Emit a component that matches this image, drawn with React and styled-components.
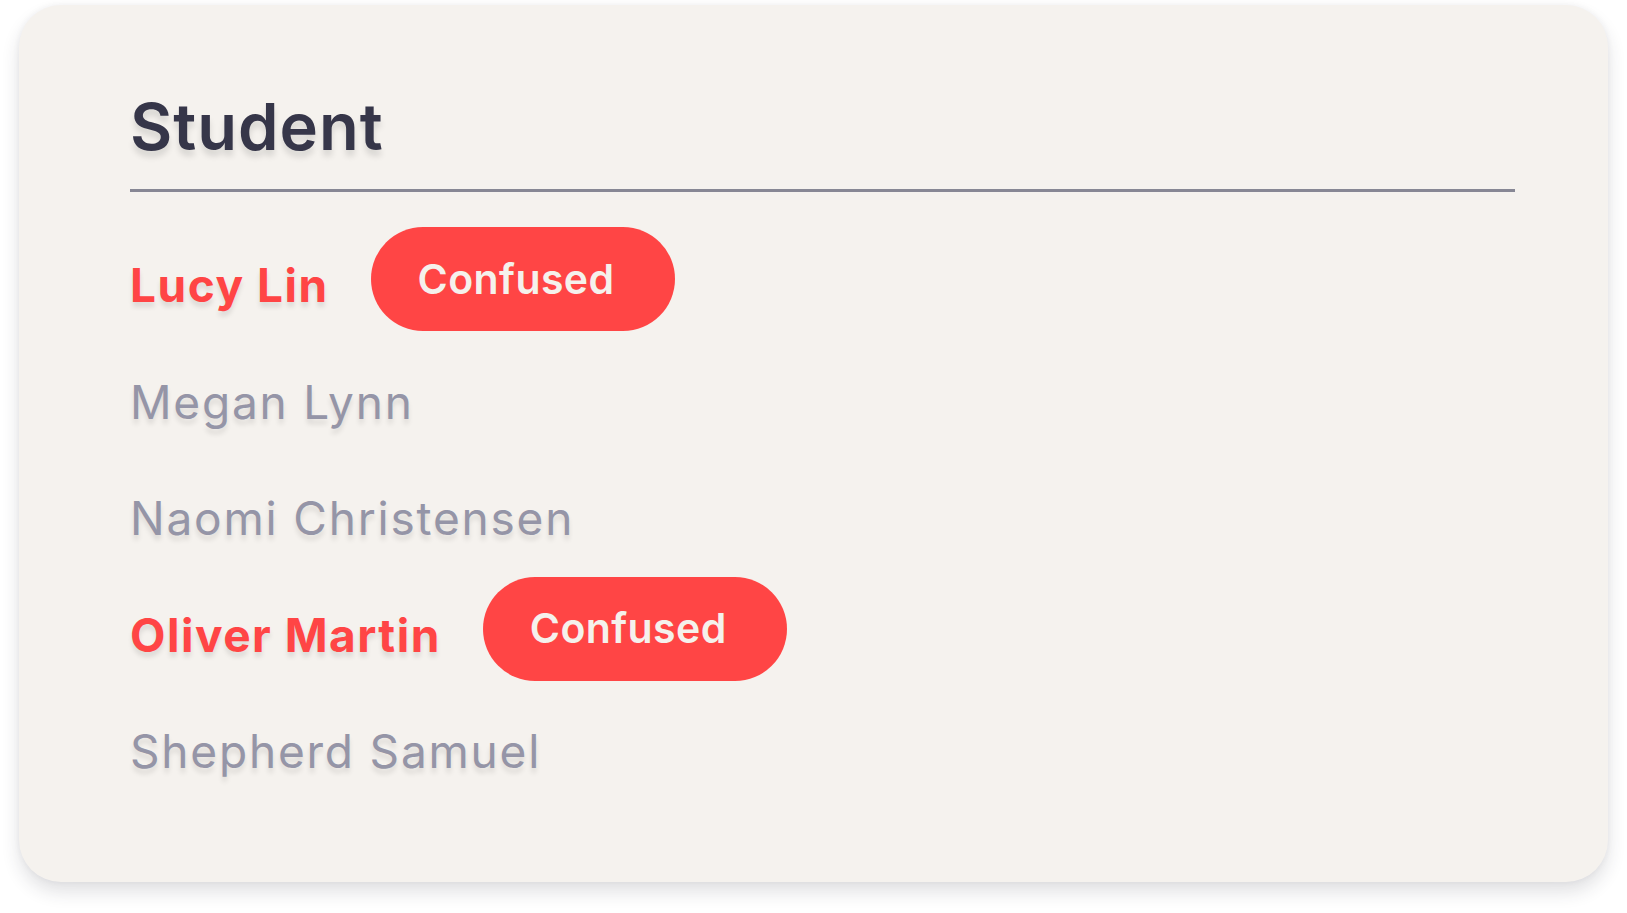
import React from "react";
import styled, { createGlobalStyle } from "styled-components";

const GlobalStyle = createGlobalStyle`
  html, body {
    margin: 0;
    padding: 0;
    background: #ffffff;
  }
  body {
    font-family: Inter, "Noto Sans", "Liberation Sans", sans-serif;
  }
`;

const Page = styled.div`
  width: 1627px;
  height: 913px;
  padding: 5px 19px 0;
  box-sizing: border-box;
`;

const Card = styled.div`
  height: 877px;
  box-sizing: border-box;
  padding: 89px 93px 0 111px;
  background: #f5f2ee;
  border-radius: 42px;
  box-shadow: 0 10px 18px rgba(40, 40, 60, 0.14), 0 0 6px rgba(40, 40, 60, 0.05);
`;

const Title = styled.h1`
  margin: 0;
  font-size: 65px;
  line-height: 1;
  font-weight: 600;
  letter-spacing: 1px;
  color: #363649;
  text-shadow: 0 6px 6px rgba(0, 0, 0, 0.12);
`;

const Divider = styled.div`
  height: 3px;
  margin-top: 30px;
  margin-bottom: 29px;
  background: #878794;
`;

const List = styled.div`
  display: flex;
  flex-direction: column;
`;

const Row = styled.div`
  display: flex;
  align-items: center;
  gap: 42px;
  height: 116.5px;
`;

const Name = styled.span`
  padding-top: 12px;
  font-size: 46px;
  line-height: 1;
  font-weight: ${(p) => (p.confused ? 700 : 400)};
  letter-spacing: ${(p) => (p.confused ? "1.5px" : "1.8px")};
  color: ${(p) => (p.confused ? "#ff4545" : "#9595a7")};
  text-shadow: 0 5px 5px rgba(0, 0, 0, 0.1);
`;

const Badge = styled.span`
  display: flex;
  align-items: center;
  box-sizing: border-box;
  width: 304px;
  height: 104px;
  padding-left: 47px;
  border-radius: 52px;
  background: #ff4545;
  color: #f5f1ec;
  font-size: 41px;
  font-weight: 600;
  letter-spacing: 0.4px;
  line-height: 1;
`;

const students = [
  { name: "Lucy Lin", confused: true },
  { name: "Megan Lynn", confused: false },
  { name: "Naomi Christensen", confused: false },
  { name: "Oliver Martin", confused: true },
  { name: "Shepherd Samuel", confused: false },
];

export default function App() {
  return (
    <>
      <GlobalStyle />
      <Page>
        <Card>
          <Title>Student</Title>
          <Divider />
          <List>
            {students.map((s) => (
              <Row key={s.name}>
                <Name confused={s.confused}>{s.name}</Name>
                {s.confused && <Badge>Confused</Badge>}
              </Row>
            ))}
          </List>
        </Card>
      </Page>
    </>
  );
}
